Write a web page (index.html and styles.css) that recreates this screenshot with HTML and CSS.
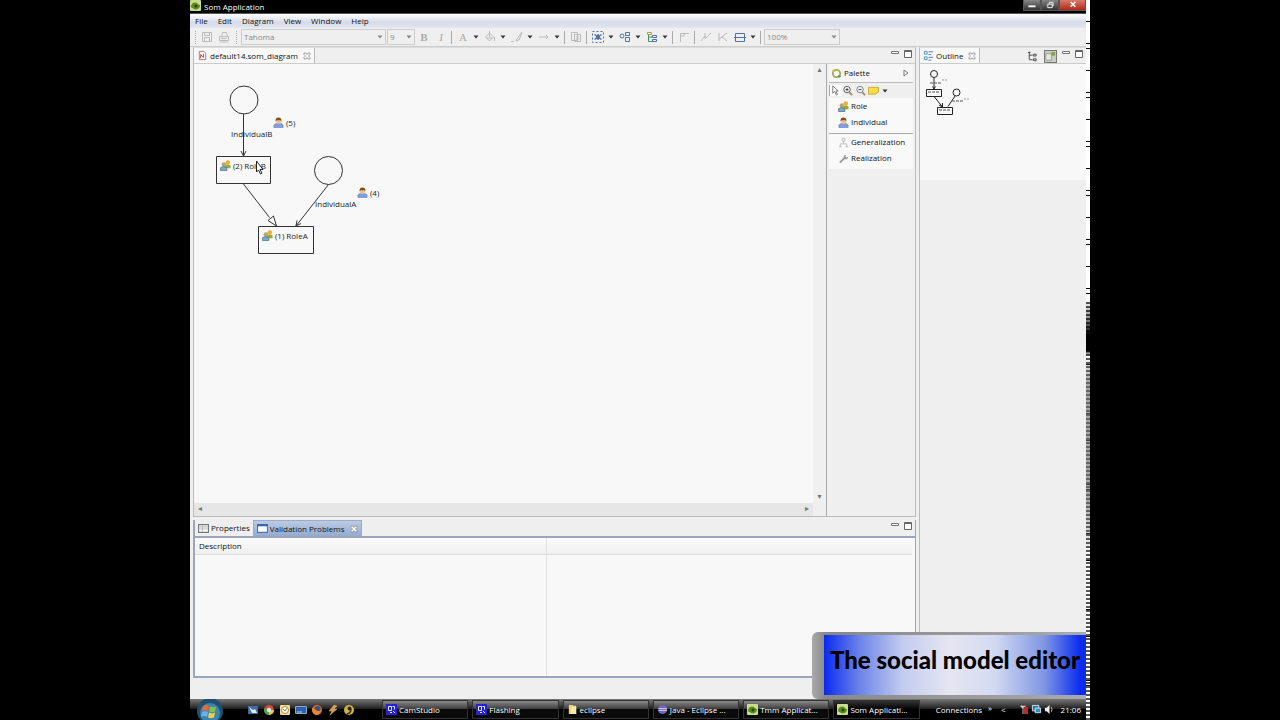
FILE: index.html
```html
<!DOCTYPE html>
<html lang="en">
<head>
  <meta charset="UTF-8" />
  <meta name="viewport" content="width=device-width, initial-scale=1.0"/>
  <title>Som Application</title>
  <link rel="stylesheet" href="styles.css">
</head>
<body>
  <svg class="defs" aria-hidden="true">
    <symbol id="i-app" viewBox="0 0 12 12"><rect width="12" height="12" rx="1" fill="#c9dd8e"/><path d="M1 8c0-4 3-6 6-5l4 3c0 3-3 5-6 4z" fill="#5f8b1e"/><circle cx="6.500" cy="6.500" r="1.700" fill="#24420b"/></symbol>
    <symbol id="i-role" viewBox="0 0 12 12"><circle cx="8.500" cy="2.800" r="2.500" fill="#e3b33c"/><path d="M5.500 9V6q3-2 6 0v3z" fill="#9aac31"/><circle cx="4.200" cy="5" r="2.500" fill="#c2a56c"/><path d="M.5 11.500V8.500q3.500-3 7 0v3z" fill="#7fa9c4" stroke="#4d7185" stroke-width=".8"/></symbol>
    <symbol id="i-person" viewBox="0 0 12 12"><path d="M1 11.500V9q1-2 3-2h4q2 0 3 2v2.500z" fill="#7fa0e0" stroke="#5674b8" stroke-width=".6"/><circle cx="6" cy="4.500" r="2.800" fill="#f0c08c"/><path d="M2.800 5q-.5-4.500 3.200-4.500T9.200 5L8 3.500H4z" fill="#80501e"/></symbol>
    <symbol id="i-close" viewBox="0 0 8 8"><path d="M1 1h2l1 1.500L5 1h2v1.500L5.500 4 7 5.500V7H5L4 5.500 3 7H1V5.500L2.500 4 1 2.500z" fill="#fff" stroke="#888" stroke-width=".8"/></symbol>
    <symbol id="i-min" viewBox="0 0 8 8"><path d="M.5 1.500h7v2h-7z" fill="#fff" stroke="#777"/></symbol>
    <symbol id="i-max" viewBox="0 0 8 8"><path d="M.5.5h7v7h-7z" fill="#fff" stroke="#666"/><path d="M0 1.500h8" stroke="#666"/></symbol>
    <symbol id="i-cam" viewBox="0 0 11 11"><path d="M0 0h11v11H0z" fill="#2524cf"/><path d="M2.500 2.500h3v4h-3zM6.500 2.500h2v3M4 8.500h2M7 7l2 2" fill="none" stroke="#e6e6ff"/></symbol>
    <symbol id="i-arrow" viewBox="0 0 6 4"><path d="M.5.500h5L3 3.500z" fill="currentColor"/></symbol>
  </svg>

  <div class="screen">
    <div class="desktop">
      <header class="titlebar">
        <svg class="icon"><use href="#i-app"/></svg>
        <h1>Som Application</h1>
        <div class="window-buttons">
          <button aria-label="Minimize"><svg viewBox="0 0 18 10"><path d="M5 5h8v2H5z" fill="#fff"/></svg></button>
          <button aria-label="Restore"><svg viewBox="0 0 18 10"><path d="M6.500 3.500h5v4h-5zM8.500 3V1.500h4v4H12" fill="none" stroke="#fff"/></svg></button>
          <button class="quit" aria-label="Close"><svg viewBox="0 0 26 10"><path d="M11 2l5 5M16 2l-5 5" stroke="#fff" stroke-width="1.600"/></svg></button>
        </div>
      </header>

      <nav class="menubar">
        <button>File</button>
        <button>Edit</button>
        <button>Diagram</button>
        <button>View</button>
        <button>Window</button>
        <button>Help</button>
      </nav>

      <div class="toolbar">
        <span class="grip"></span>
        <button class="tool off" aria-label="Save"><svg viewBox="0 0 12 12"><path d="M1.500 1.500h9v9h-9zM3.500 1.500v3h5v-3M3.500 10.500v-4h5v4"/></svg></button>
        <button class="tool off" aria-label="Print"><svg viewBox="0 0 12 12"><path d="M1.500 5.500h9v4h-9zM3.500 5.500l1-4h4l1 4M3 7.500h6M2 11h8"/></svg></button>
        <span class="grip"></span>
        <span class="combo font"><select aria-label="Font"><option>Tahoma</option></select><svg><use href="#i-arrow"/></svg></span>
        <span class="combo size"><select aria-label="Font size"><option>9</option></select><svg><use href="#i-arrow"/></svg></span>
        <button class="tool off bold">B</button>
        <button class="tool off italic">I</button>
        <span class="sep"></span>
        <div class="split"><button class="tool off letter">A</button><button class="drop" aria-label="Font color"><svg><use href="#i-arrow"/></svg></button></div>
        <div class="split"><button class="tool off" aria-label="Fill"><svg viewBox="0 0 12 12"><path d="M1.500 6l4-4 4 4-4 4zM5.500 0v6M10.500 6v4M3 7h5"/></svg></button><button class="drop" aria-label="Fill color"><svg><use href="#i-arrow"/></svg></button></div>
        <div class="split"><button class="tool off" aria-label="Line"><svg viewBox="0 0 12 12"><path d="M0 10.500h3M5 10l1-2 5-7M5 10l3-1 3-7"/></svg></button><button class="drop" aria-label="Line color"><svg><use href="#i-arrow"/></svg></button></div>
        <div class="split"><button class="tool off" aria-label="Line style"><svg viewBox="0 0 12 12"><path d="M1 6h9M8 4l2 2-2 2"/></svg></button><button class="drop" aria-label="Line styles"><svg><use href="#i-arrow"/></svg></button></div>
        <span class="sep"></span>
        <button class="tool off" aria-label="Copy appearance"><svg viewBox="0 0 12 12"><path d="M1.500 1.500h6v8h-6zM4.500 3.500h6v7h-6zM6 6h3M6 8h3"/></svg></button>
        <span class="sep"></span>
        <div class="split"><button class="tool" aria-label="Select all"><svg viewBox="0 0 12 12"><path d="M.5.500h11v11H.5z" stroke-dasharray="2 2"/><path d="M2.500 3.500l7 5M2.500 8.500l7-5M4 6h4M6 3v6" stroke-width="1.500"/></svg></button><button class="drop" aria-label="Select"><svg><use href="#i-arrow"/></svg></button></div>
        <div class="split"><button class="tool" aria-label="Align"><svg viewBox="0 0 12 12"><circle cx="3" cy="5" r="2"/><path d="M6.500 1.500h4v3h-4zM6.500 6.500h4v4h-4z"/></svg></button><button class="drop" aria-label="Align options"><svg><use href="#i-arrow"/></svg></button></div>
        <div class="split"><button class="tool" aria-label="Arrange"><svg viewBox="0 0 12 12"><path d="M1.500 1.500h4v2h-4z" stroke="#a0a63e"/><path d="M2.500 4v6.500H7M3 6h3" stroke="#3c9363"/><path d="M6.500 4.500h4v2h-4zM6.500 8.500h4v2h-4z"/></svg></button><button class="drop" aria-label="Arrange options"><svg><use href="#i-arrow"/></svg></button></div>
        <span class="sep"></span>
        <button class="tool off" aria-label="Auto size"><svg viewBox="0 0 12 12"><path d="M2.500 11V2.500H11M2.500 5H6V2.500"/></svg></button>
        <span class="sep"></span>
        <button class="tool off" aria-label="Show labels"><svg viewBox="0 0 12 12"><path d="M1 10l4-5 1 2 5-5M5 2v6"/></svg></button>
        <button class="tool off" aria-label="Hide labels"><svg viewBox="0 0 12 12"><path d="M2 2v8M2 8l8-6M5 6l5 4"/></svg></button>
        <div class="split"><button class="tool" aria-label="Compartments"><svg viewBox="0 0 12 12"><path d="M1.500 2.500h9v8h-9zM0 6.500h12"/></svg></button><button class="drop" aria-label="Compartment options"><svg><use href="#i-arrow"/></svg></button></div>
        <span class="sep"></span>
        <span class="combo zoom"><select aria-label="Zoom"><option>100%</option></select><svg><use href="#i-arrow"/></svg></span>
      </div>

      <main class="workbench">
        <div class="left">
          <section class="part editor">
            <div class="tabs">
              <button class="tab active"><svg class="icon" viewBox="0 0 10 12"><path d="M1.500 1.500h5l2 2v7h-7z" fill="#fff" stroke="#b07070"/><path d="M3 9V5l3 3V4" fill="none" stroke="#b33"/></svg>default14.som_diagram<svg class="close"><use href="#i-close"/></svg></button>
              <div class="part-buttons">
                <button aria-label="Minimize"><svg><use href="#i-min"/></svg></button>
                <button aria-label="Maximize"><svg><use href="#i-max"/></svg></button>
              </div>
            </div>
            <div class="editor-body">
              <div class="canvas">
                <svg class="diagram" width="220" height="210" viewBox="194 64 220 210">
                  <g fill="none" stroke="#333">
                    <circle cx="244" cy="100" r="14"/>
                    <circle cx="328.500" cy="170.500" r="14"/>
                    <path d="M216.500 156.500h54v27h-54zM258.500 226.500h55v27h-55z"/>
                    <path d="M243.500 114v42M241 151l2.500 5 2.500-5"/>
                    <path d="M243.500 184l26 33.500"/>
                    <path d="M268 220.500l5.500-4.500 3 10z" fill="#f8f8f8"/>
                    <path d="M328.500 184.500L296 226M297 220.500l-1 5.500 5-2.500"/>
                  </g>
                  <g class="labels">
                    <text x="231" y="137">IndividualB</text>
                    <text x="315" y="207">IndividualA</text>
                    <text x="286" y="126">(5)</text>
                    <text x="370" y="196">(4)</text>
                    <text x="233" y="169">(2) RoleB</text>
                    <text x="275" y="239">(1) RoleA</text>
                  </g>
                  <use href="#i-person" x="273" y="117" width="11" height="11"/>
                  <use href="#i-person" x="357" y="187" width="11" height="11"/>
                  <use href="#i-role" x="220" y="160" width="11" height="11"/>
                  <use href="#i-role" x="262" y="230" width="11" height="11"/>
                  <path d="M256.500 161v11l2-2 2 4 1.500-1-2-3.500h3z" fill="#fff" stroke="#222"/>
                </svg>
              </div>
              <div class="vscroll"><span>&#9652;</span><span>&#9662;</span></div>
              <div class="hscroll"><span>&#9666;</span><span>&#9656;</span></div>
              <aside class="palette">
                <h2><svg class="icon" viewBox="0 0 12 12"><circle cx="6" cy="6" r="4" fill="#fff" stroke="#9dae51" stroke-width="2"/><circle cx="3" cy="3" r="1.500" fill="#e0b040"/><circle cx="9" cy="9" r="1.500" fill="#58a05a"/></svg>Palette<svg class="expand" viewBox="0 0 6 8"><path d="M1 1v6l4-3z" fill="#fff" stroke="#777"/></svg></h2>
                <div class="palette-tools">
                  <button class="picked" aria-label="Select"><svg viewBox="0 0 12 12"><path d="M3 1v8l2-2 2 4 1-.5-1.500-4H9z" fill="#fff" stroke="#777"/></svg></button>
                  <button aria-label="Zoom in"><svg viewBox="0 0 12 12"><path d="M8 8l3 3" stroke="#a58a55" stroke-width="2"/><circle cx="5.500" cy="5" r="3.500" fill="#eef3fa" stroke="#555"/><path d="M4 5h3M5.500 3.500v3" stroke="#333"/></svg></button>
                  <button aria-label="Zoom out"><svg viewBox="0 0 12 12"><path d="M8 8l3 3" stroke="#a58a55" stroke-width="2"/><circle cx="5.500" cy="5" r="3.500" fill="#eef3fa" stroke="#777"/><path d="M4 5h3" stroke="#333"/></svg></button>
                  <button aria-label="Note"><svg viewBox="0 0 12 12"><path d="M.5 2.500h11v5l-3 2.500h-8z" fill="#f6df45" stroke="#c6a62e"/></svg></button>
                  <button class="drop" aria-label="Notes"><svg><use href="#i-arrow"/></svg></button>
                </div>
                <div class="palette-group">
                  <button><svg class="icon"><use href="#i-role"/></svg>Role</button>
                  <button><svg class="icon"><use href="#i-person"/></svg>Individual</button>
                </div>
                <div class="palette-group">
                  <button><svg class="icon" viewBox="0 0 12 12"><path d="M4.500 1.500h3v3h-3zM6 5v2M2.500 11V7.500h7V11M1 10.500h3M8 10.500h3" fill="none" stroke="#bbb"/></svg>Generalization</button>
                  <button><svg class="icon" viewBox="0 0 12 12"><path d="M2 10.500l5-5" stroke="#999" stroke-width="2"/><path d="M6 5q0-3 3-3L8 4l1 1 2-1q0 3-3 3z" fill="#999"/></svg>Realization</button>
                </div>
              </aside>
            </div>
          </section>

          <section class="part problems">
            <div class="tabs">
              <button class="tab"><svg class="icon" viewBox="0 0 10 10"><path d="M.5 1.500h9v7h-9z" fill="#fff" stroke="#777"/><path d="M1 3.500h8M1 5.500h8M4 2v6" stroke="#bbb"/></svg>Properties</button>
              <button class="tab focused"><svg class="icon" viewBox="0 0 10 10"><path d="M.5 1.500h9v7h-9z" fill="#fff" stroke="#4a74b4"/><path d="M0 2h10" stroke="#3668b0" stroke-width="2"/></svg>Validation Problems<svg class="close"><use href="#i-close"/></svg></button>
              <div class="part-buttons">
                <button aria-label="Minimize"><svg><use href="#i-min"/></svg></button>
                <button aria-label="Maximize"><svg><use href="#i-max"/></svg></button>
              </div>
            </div>
            <div class="table-box">
              <table>
                <thead><tr><th>Description</th><th></th></tr></thead>
                <tbody><tr><td></td><td></td></tr></tbody>
              </table>
            </div>
          </section>
        </div>

        <section class="part outline">
          <div class="tabs">
            <button class="tab active"><svg class="icon" viewBox="0 0 12 12"><path d="M1.500 1.500h3v3h-3zM1.500 7.500h3v3h-3z" fill="#fff" stroke="#3c8fb8"/><path d="M6 2h5M6 5h3M6 8h5M6 11h3" stroke="#4a74b4"/></svg>Outline<svg class="close"><use href="#i-close"/></svg></button>
            <div class="part-buttons">
              <button class="view" aria-label="Tree view"><svg viewBox="0 0 12 12"><path d="M2.500 1v8.500H6M2.500 4.500H6M1 1.500h3M7 3.500h3v2H7zM7 8.500h3v2H7z" fill="none" stroke="#444"/></svg></button>
              <button class="view pressed" aria-label="Overview"><svg viewBox="0 0 12 12"><path d="M1 3h6v7H1z" fill="#e8ecdf" stroke="#999"/><path d="M7 1h4v4H7z" fill="#8ba04a"/></svg></button>
              <button aria-label="Minimize"><svg><use href="#i-min"/></svg></button>
              <button aria-label="Maximize"><svg><use href="#i-max"/></svg></button>
            </div>
          </div>
          <div class="overview">
            <svg width="60" height="60" viewBox="920 64 60 60" fill="none" stroke="#222">
              <circle cx="934" cy="74" r="3.500"/><circle cx="956.500" cy="92.500" r="3.500"/>
              <path d="M926.500 89.500h15v7h-15zM937.500 107.500h15v7h-15z"/>
              <path d="M934 78v11M932.500 86.500l1.500 2.500 1.500-2.500M934.500 97l8 10M939 105l3.500 2v-4M955 96l-7 10.500"/>
              <path d="M930 83h12M952 101h11M928 92h12M939 110h12" stroke="#555" stroke-dasharray="3 1"/>
              <path d="M942 80h6M964 99h6" stroke="#999" stroke-dasharray="2 1"/>
            </svg>
          </div>
        </section>
      </main>

      <footer class="taskbar">
        <button class="start" aria-label="Start"><svg viewBox="0 0 28 21"><circle cx="14" cy="12" r="13" fill="#21506f"/><circle cx="14" cy="14" r="10" fill="#3b86ad"/><path d="M7 7q3-2 6 0l-1 5q-3-1.500-6 0z" fill="#e36b35"/><path d="M14 7.500q3 1.500 6 0l-1 5q-3 1.500-6 0z" fill="#8fbd4a"/><path d="M6 13q3-1.500 6 0l-1 5q-3-2-6 0z" fill="#68b4e8"/><path d="M13 13.500q3 1.500 6 0l-1 5q-3 1.500-6 0z" fill="#f3cc46"/></svg></button>
        <div class="quick">
          <button aria-label="Mail"><svg viewBox="0 0 12 12"><path d="M1 2h10v8H1z" fill="#3f6e9e"/><path d="M2 3l4 3 2-1 2 4H5z" fill="#dce9f5"/></svg></button>
          <button aria-label="Chrome"><svg viewBox="0 0 12 12"><circle cx="6" cy="6" r="5" fill="#d34a38"/><path d="M6 6L1.500 4A5 5 0 006 11z" fill="#4ba54b"/><path d="M6 6h5a5 5 0 01-5 5z" fill="#efc83c"/><circle cx="6" cy="6" r="2.200" fill="#d9e8f5"/></svg></button>
          <button aria-label="Clock"><svg viewBox="0 0 12 12"><rect x="1" y="1" width="10" height="10" rx="1" fill="#f0dd94"/><circle cx="6" cy="6" r="3.500" fill="#fff" stroke="#b28a3a"/><path d="M4 5l2 2 2-3" fill="none" stroke="#a37625"/></svg></button>
          <button aria-label="Show desktop"><svg viewBox="0 0 12 12"><path d="M.5 2.500h11v7H.5z" fill="#2e61a8" stroke="#87a7cd"/><path d="M2 8h5" stroke="#b5d0f0"/></svg></button>
          <button aria-label="Firefox"><svg viewBox="0 0 12 12"><circle cx="6" cy="6" r="5" fill="#dd6b20"/><circle cx="6.500" cy="5" r="3" fill="#34508e"/><path d="M1 4q2 0 4 2t5 0q-1 5-5 5-4-1-4-7z" fill="#e9882c"/></svg></button>
          <button aria-label="Winamp"><svg viewBox="0 0 12 12"><path d="M7 1L2 7h3l-2 4 7-6H7l3-3z" fill="#d99b4c" stroke="#c9a878" stroke-width=".6"/></svg></button>
          <button aria-label="Norton"><svg viewBox="0 0 12 12"><circle cx="6" cy="6" r="5" fill="#d3b640"/><circle cx="6.500" cy="4.500" r="2" fill="#332a0c"/><path d="M8 5q0 4-4 5" fill="none" stroke="#332a0c" stroke-width="1.500"/></svg></button>
        </div>
        <div class="tasks">
          <button><svg class="icon"><use href="#i-cam"/></svg>CamStudio</button>
          <button><svg class="icon"><use href="#i-cam"/></svg>Flashing</button>
          <button><svg class="icon" viewBox="0 0 12 12"><path d="M2 1h4l1 1h3v9H2z" fill="#e9d67f"/><path d="M5 3h5v8H4z" fill="#f6ebae"/></svg>eclipse</button>
          <button><svg class="icon" viewBox="0 0 12 12"><circle cx="6" cy="6" r="5" fill="#6f66b5"/><path d="M2 5h9M2 7h9" stroke="#d8d5f0"/></svg>Java - Eclipse ...</button>
          <button><svg class="icon"><use href="#i-app"/></svg>Tmm Applicat...</button>
          <button class="current"><svg class="icon"><use href="#i-app"/></svg>Som Applicati...</button>
        </div>
        <div class="tray">
          <span class="conn">Connections</span>
          <span class="more">&raquo;</span>
          <span class="less">&lt;</span>
          <svg viewBox="0 0 12 12"><path d="M2 2l3 3v6h1V5l3-3z" fill="#ddd"/><path d="M6 3h5v8H6z" fill="#b02d35"/></svg>
          <svg viewBox="0 0 12 12"><path d="M1.500 1.500h7v6h-7z" fill="#1f7ba8" stroke="#dceaf5"/><path d="M4.500 4.500h6v5h-6z" fill="#2d94c4" stroke="#dceaf5"/></svg>
          <svg viewBox="0 0 12 12"><path d="M1 4h2l3-3v10L3 8H1z" fill="#eee"/><path d="M8 3.500q1.500 2.500 0 5" fill="none" stroke="#ccc"/></svg>
          <time>21:06</time>
        </div>
      </footer>

      <div class="caption">The social model editor</div>
    </div>
    <div class="edge"></div>
  </div>
</body>
</html>
```
FILE: styles.css
```css
* {
  box-sizing: border-box;
}
body {
  margin: 0;
  background: #000;
  color: #111;
  font-family: "Open Sans", "Noto Sans", sans-serif;
  font-size: 8px;
  line-height: 12px;
}
button, select {
  font: inherit;
  color: inherit;
  background: none;
  border: 0;
  padding: 0;
  margin: 0;
}
h1, h2 {
  font: inherit;
  margin: 0;
}
svg {
  display: block;
  flex: none;
}
.defs {
  position: absolute;
  width: 0;
  height: 0;
}
.icon {
  width: 11px;
  height: 11px;
}
.screen {
  display: flex;
  height: 100vh;
  margin: 0 190px;
}
.desktop {
  position: relative;
  flex: 1;
  min-width: 0;
  display: flex;
  flex-direction: column;
  background: #efefef;
}
/* torn right edge of the recording */
.edge {
  width: 4px;
  background:
    linear-gradient(transparent 0 300px, rgba(0,0,0,.5) 320px, #000 335px 350px, transparent 356px),
    linear-gradient(transparent 0 356px, rgba(110,110,110,.6) 380px 500px, transparent 560px),
    repeating-linear-gradient(transparent 0 2px, #555 2px 4px) 0 300px no-repeat,
    repeating-linear-gradient(#fff 0 21px, #000 21px 22px, #fff 22px 43px, #000 43px 44px, #fff 44px 48px, #000 48px 49px);
}

/* title, menu, toolbar */
.titlebar {
  display: flex;
  height: 14px;
  gap: 3px;
  background: #000;
  border-bottom: 1px solid #555;
  color: #fff;
}
.titlebar h1 {
  flex: 1;
  line-height: 13px;
}
.window-buttons {
  display: flex;
  height: 11px;
}
.window-buttons button {
  width: 18px;
  background: linear-gradient(#888, #333);
  border: 1px solid #555;
  border-top: 0;
}
.window-buttons .quit {
  width: 27px;
  background: linear-gradient(#d77b6c, #b02818);
}
.menubar {
  display: flex;
  gap: 10px;
  height: 14px;
  padding: 0 5px;
  background: linear-gradient(#fff, #d6dbea 60%, #e2e6f1);
}
.menubar button {
  line-height: 14px;
}
.toolbar {
  display: flex;
  align-items: center;
  gap: 1px;
  height: 19px;
  padding-left: 5px;
  border-bottom: 1px solid #ccc;
}
.grip {
  height: 13px;
  border-left: 1px dotted #aaa;
  margin: 0 3px;
}
.grip:first-child {
  margin: 0 2px 0 0;
}
.sep {
  width: 1px;
  height: 13px;
  background: #aaa;
  margin: 0 2px 0 1px;
}
.tool {
  width: 16px;
  height: 16px;
  display: flex;
  align-items: center;
  justify-content: center;
}
.tool svg {
  width: 12px;
  height: 12px;
  fill: none;
  stroke: #54719f;
}
.tool.off {
  color: #aaa;
}
.tool.off svg {
  stroke: #bbb;
}
.bold, .italic, .letter {
  font-family: "Liberation Serif", serif;
  font-size: 11px;
}
.bold {
  font-weight: bold;
}
.italic {
  font-style: italic;
}
.split {
  display: flex;
  align-items: center;
}
.drop {
  width: 10px;
  color: #333;
}
.drop svg, .combo svg {
  width: 6px;
  height: 4px;
  margin: auto;
}
.combo {
  display: flex;
  align-items: center;
  height: 16px;
  padding-right: 2px;
  border: 1px solid #ccc;
  color: #888;
}
.combo select {
  flex: 1;
  min-width: 0;
  appearance: none;
  padding-left: 2px;
}
.combo svg {
  margin: 0;
}
.font {
  width: 145px;
}
.size {
  width: 28px;
}
.zoom {
  width: 76px;
}

/* workbench */
.workbench {
  flex: 1;
  min-height: 0;
  display: flex;
  gap: 3px;
  padding-left: 3px;
}
.left {
  flex: 1;
  min-width: 0;
  display: flex;
  flex-direction: column;
  gap: 3px;
  padding-bottom: 21px;
}
.part {
  display: flex;
  flex-direction: column;
  border: 1px solid #bbb;
  border-top-color: #ddd;
}
.editor {
  flex: 1;
  min-height: 0;
}
.tabs {
  display: flex;
  height: 16px;
  border-bottom: 1px solid #ccc;
}
.tab {
  display: flex;
  align-items: center;
  gap: 2px;
  padding: 0 3px;
}
.tab.active {
  background: #f8f8f8;
  border-right: 1px solid #bbb;
}
.tab.focused {
  background: linear-gradient(#bccbe2, #93abd0);
  border: 1px solid #9aaccb;
  border-bottom: 0;
}
.close {
  width: 8px;
  height: 8px;
  margin-left: 3px;
}
.part-buttons {
  display: flex;
  gap: 5px;
  margin-left: auto;
  padding: 2px 3px 0 0;
}
.part-buttons button {
  width: 8px;
  height: 8px;
}
.part-buttons svg {
  width: 8px;
  height: 8px;
}
.part-buttons .view {
  width: 13px;
  height: 13px;
}
.view svg {
  width: 11px;
  height: 11px;
  margin: auto;
}
.part-buttons .pressed {
  background: #c9cdb9;
  border: 1px solid #777;
}
.editor-body {
  flex: 1;
  min-height: 0;
  display: grid;
  grid-template-columns: 1fr 13px 89px;
  grid-template-rows: 1fr 13px;
}
.canvas {
  min-width: 0;
  overflow: hidden;
  background: #f8f8f8;
}
.labels {
  fill: #222;
}
.vscroll, .hscroll {
  display: flex;
  justify-content: space-between;
  color: #777;
  font-family: "DejaVu Sans", sans-serif;
}
.vscroll {
  flex-direction: column;
  align-items: center;
  background: #f0f0f0;
}
.hscroll {
  grid-row: 2;
  padding: 0 4px;
  background: #e6e6e6;
}
.palette {
  grid-column: 3;
  grid-row: 1 / 3;
  border-left: 1px solid #aaa;
  padding: 0 2px;
}
.palette h2 {
  display: flex;
  align-items: center;
  gap: 2px;
  height: 18px;
  padding-left: 2px;
  background: #f6f6f6;
}
.expand {
  width: 6px;
  height: 8px;
  margin: 0 4px 0 auto;
}
.palette-tools {
  display: flex;
  align-items: center;
  height: 16px;
  border-top: 1px solid #bbb;
}
.palette-tools button {
  width: 13px;
}
.palette-tools svg {
  width: 11px;
  height: 11px;
}
.palette-tools .drop {
  width: 8px;
}
.palette-tools .drop svg {
  width: 6px;
  height: 4px;
}
.palette-tools .picked {
  background: #fafafa;
  border-left: 1px solid #aaa;
}
.palette-group {
  padding: 0 9px 3px;
  background: #f9f9f9;
}
.palette-group + .palette-group {
  border-top: 1px solid #aaa;
}
.palette-group button {
  display: flex;
  align-items: center;
  gap: 2px;
  height: 16px;
}

/* problems view */
.problems {
  height: 158px;
  border: 2px solid #9ba6bd;
  border-width: 0 1px 2px 2px;
}
.problems .tabs {
  border-bottom: 2px solid #9ba6bd;
  height: 18px;
}
.table-box {
  flex: 1;
  padding-right: 3px;
  background: #f8f8f8;
}
table {
  width: 100%;
  height: 100%;
  border-collapse: collapse;
  table-layout: fixed;
}
th {
  height: 16px;
  padding: 0 4px;
  text-align: left;
  font-weight: normal;
  background: linear-gradient(#fafafa, #f0f0f0);
  border-bottom: 1px solid #ddd;
}
th + th, td + td {
  border-left: 1px solid #e2e2e2;
}
th:first-child {
  width: 49%;
}

/* outline */
.outline {
  width: 167px;
  border-right: 0;
}
.overview {
  height: 116px;
  background: #f8f8f8;
}

/* taskbar */
.taskbar {
  display: flex;
  align-items: center;
  height: 21px;
  padding: 0 5px 0 6px;
  background: linear-gradient(#777, #222 45%, #000 50%);
  color: #fff;
}
.start svg {
  width: 28px;
  height: 21px;
}
.quick {
  display: flex;
  gap: 4px;
  padding: 0 27px 0 23px;
}
.quick svg {
  width: 12px;
  height: 12px;
}
.tasks {
  display: flex;
  flex: 1;
  min-width: 0;
  gap: 4px;
}
.tasks button {
  flex: 1;
  min-width: 0;
  display: flex;
  align-items: center;
  gap: 2px;
  height: 19px;
  padding-left: 3px;
  white-space: nowrap;
  overflow: hidden;
  background: linear-gradient(#8a8a8a, #3a3a3a 48%, #0a0a0a 50%);
  border: 1px solid #333;
}
.tasks .current {
  background: linear-gradient(#333, #000 50%);
}
.tray {
  display: flex;
  align-items: center;
  gap: 2px;
  padding-left: 16px;
}
.tray svg {
  width: 11px;
  height: 11px;
}
.more {
  padding: 0 7px 4px 4px;
}
.less {
  padding-right: 10px;
}
.tray time {
  padding-left: 4px;
}

/* caption over the lower right corner */
.caption {
  position: absolute;
  right: 0;
  bottom: 21px;
  padding: 11px 6px 21px;
  border: solid transparent;
  border-width: 3px 0 4px 12px;
  border-radius: 6px 0 0 6px;
  background:
    linear-gradient(90deg, #0a2bf0, #6f86e8 14%, #c3cbee 30%, #e6e6f2 48%, #d3daf1 65%, #8196e4 84%, #0a2bf0 98%) padding-box,
    linear-gradient(90deg, #aaa, #888 5%, #aaa) border-box;
  color: #000;
  font-family: Lato, sans-serif;
  font-weight: 900;
  font-size: 24px;
  line-height: 28px;
}
```
